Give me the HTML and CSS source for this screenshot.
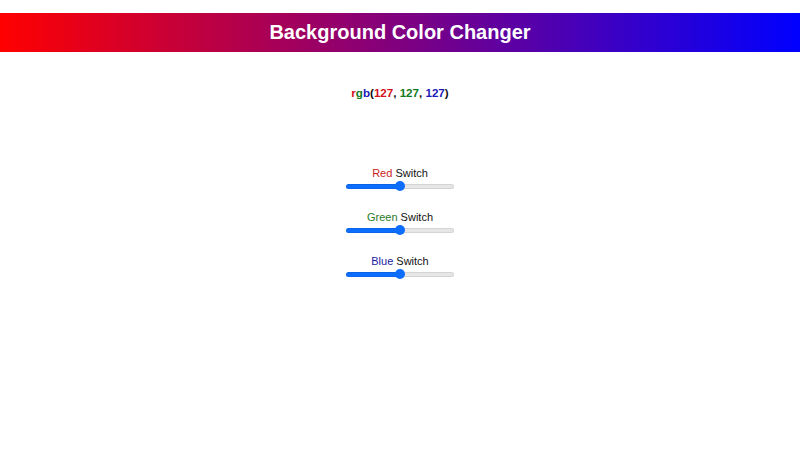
FILE: index.html
```html
<!DOCTYPE html>
<html>
<head>
<meta charset="utf-8">
<link rel="stylesheet" href="styles.css">
</head>
<body>
<header class="bar"><h1 class="title">Background Color Changer</h1></header>
<p class="value"><span class="r">r</span><span class="g">g</span><span class="b">b</span>(<span class="r">127</span>, <span class="g">127</span>, <span class="b">127</span>)</p>
<div class="controls">
  <div class="control">
    <label class="label"><span class="rl">Red</span> Switch</label>
    <input class="range" type="range" min="0" max="255" value="127">
  </div>
  <div class="control">
    <label class="label"><span class="gl">Green</span> Switch</label>
    <input class="range" type="range" min="0" max="255" value="127">
  </div>
  <div class="control">
    <label class="label"><span class="bl">Blue</span> Switch</label>
    <input class="range" type="range" min="0" max="255" value="127">
  </div>
</div>
</body>
</html>
```
FILE: styles.css
```css
html, body { margin: 0; padding: 0; background: #fff; }
body { font-family: "Liberation Sans", Arial, sans-serif; color: #111; }
.bar {
  margin-top: 13px;
  height: 39px;
  background: linear-gradient(to right, #ff0000, #0000ff);
  display: flex;
  align-items: center;
  justify-content: center;
}
.title { margin: 0; color: #fff; font-size: 20px; font-weight: bold; }
.value {
  margin: 34px 0 0;
  text-align: center;
  font-weight: bold;
  font-size: 11.6px;
  line-height: 14px;
}
.r { color: #d4101c; }
.g { color: #117a1c; }
.b { color: #1a1ab8; }
.controls {
  margin-top: 66px;
  display: flex;
  flex-direction: column;
  align-items: center;
  gap: 19px;
}
.control { display: flex; flex-direction: column; align-items: center; }
.label { font-size: 11px; line-height: 14px; }
.rl { color: #cc2222; }
.gl { color: #2a7a2a; }
.bl { color: #1a1aa0; }
.range {
  -webkit-appearance: none;
  appearance: none;
  width: 108px;
  height: 10px;
  margin: 1px 0 0;
  background: transparent;
}
.range::-webkit-slider-runnable-track {
  height: 5px;
  border-radius: 3px;
  background: linear-gradient(to right, #0d6efd 0 50%, #e6e6e6 50% 100%);
  box-shadow: inset 0 0 0 1px rgba(0,0,0,0.08);
}
.range::-webkit-slider-thumb {
  -webkit-appearance: none;
  appearance: none;
  width: 10px;
  height: 10px;
  margin-top: -2.5px;
  border-radius: 50%;
  background: #0d6efd;
  border: none;
}
```
